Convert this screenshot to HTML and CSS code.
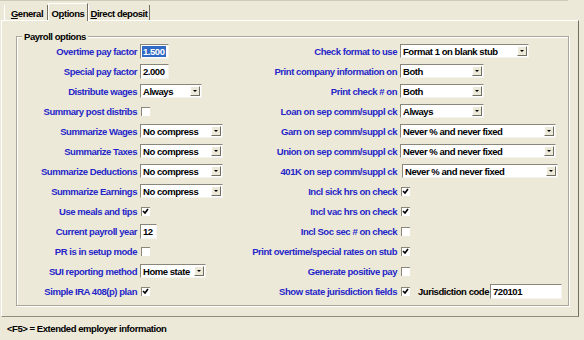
FILE: index.html
```html
<!DOCTYPE html>
<html lang="en">
<head>
    <meta charset="UTF-8">
    <title>Payroll options</title>
    <link rel="stylesheet" href="styles.css">
</head>
<body>

<div class="topline"></div>

<div class="tabs">
    <div class="tab tab-general"><u>G</u>eneral</div>
    <div class="tab tab-options active">O<u>p</u>tions</div>
    <div class="tab tab-direct"><u>D</u>irect deposit</div>
</div>

<div class="panel">
    <fieldset class="group">
        <legend>Payroll options</legend>
        <div class="form">
            <!-- row 1 -->
            <span class="label">Overtime pay factor</span>
            <span class="input w29"><span class="sel">1.500</span></span>
            <span class="label">Check format to use</span>
            <span class="select w128">Format 1 on blank stub<i class="btn"></i></span>

            <!-- row 2 -->
            <span class="label">Special pay factor</span>
            <span class="input w29">2.000</span>
            <span class="label">Print company information on</span>
            <span class="select w83">Both<i class="btn"></i></span>

            <!-- row 3 -->
            <span class="label">Distribute wages</span>
            <span class="select w61">Always<i class="btn"></i></span>
            <span class="label">Print check # on</span>
            <span class="select w83">Both<i class="btn"></i></span>

            <!-- row 4 -->
            <span class="label">Summary post distribs</span>
            <span class="check"></span>
            <span class="label">Loan on sep comm/suppl ck</span>
            <span class="select w83">Always<i class="btn"></i></span>

            <!-- row 5 -->
            <span class="label">Summarize Wages</span>
            <span class="select w82">No compress<i class="btn"></i></span>
            <span class="label">Garn on sep comm/suppl ck</span>
            <span class="select w155">Never % and never fixed<i class="btn"></i></span>

            <!-- row 6 -->
            <span class="label">Summarize Taxes</span>
            <span class="select w82">No compress<i class="btn"></i></span>
            <span class="label">Union on sep comm/suppl ck</span>
            <span class="select w155">Never % and never fixed<i class="btn"></i></span>

            <!-- row 7 -->
            <span class="label">Summarize Deductions</span>
            <span class="select w82">No compress<i class="btn"></i></span>
            <span class="label">401K on sep comm/suppl ck</span>
            <span class="select w155 shift">Never % and never fixed<i class="btn"></i></span>

            <!-- row 8 -->
            <span class="label">Summarize Earnings</span>
            <span class="select w82">No compress<i class="btn"></i></span>
            <span class="label">Incl sick hrs on check</span>
            <span class="check on"><svg viewBox="0 0 7 7"><path d="M1 3 L3 5 L6 1"/></svg></span>

            <!-- row 9 -->
            <span class="label">Use meals and tips</span>
            <span class="check on"><svg viewBox="0 0 7 7"><path d="M1 3 L3 5 L6 1"/></svg></span>
            <span class="label">Incl vac hrs on check</span>
            <span class="check on"><svg viewBox="0 0 7 7"><path d="M1 3 L3 5 L6 1"/></svg></span>

            <!-- row 10 -->
            <span class="label">Current payroll year</span>
            <span class="input w16">12</span>
            <span class="label">Incl Soc sec # on check</span>
            <span class="check"></span>

            <!-- row 11 -->
            <span class="label">PR is in setup mode</span>
            <span class="check"></span>
            <span class="label">Print overtime/special rates on stub</span>
            <span class="check on"><svg viewBox="0 0 7 7"><path d="M1 3 L3 5 L6 1"/></svg></span>

            <!-- row 12 -->
            <span class="label">SUI reporting method</span>
            <span class="select w65">Home state<i class="btn"></i></span>
            <span class="label">Generate positive pay</span>
            <span class="check"></span>

            <!-- row 13 -->
            <span class="label">Simple IRA 408(p) plan</span>
            <span class="check on"><svg viewBox="0 0 7 7"><path d="M1 3 L3 5 L6 1"/></svg></span>
            <span class="label">Show state jurisdiction fields</span>
            <span class="juris">
                <span class="check on"><svg viewBox="0 0 7 7"><path d="M1 3 L3 5 L6 1"/></svg></span>
                <span class="plain">Jurisdiction code</span>
                <span class="input w71">720101</span>
            </span>
        </div>
    </fieldset>
</div>

<div class="status">&lt;F5&gt; = Extended employer information</div>

</body>
</html>
```

FILE: styles.css
```css
* {
    margin: 0;
    padding: 0;
    box-sizing: border-box;
}

body {
    width: 584px;
    height: 340px;
    overflow: hidden;
    background: #ece9d8;
    font-family: "Liberation Sans", Arial, sans-serif;
    font-size: 9.5px;
    font-weight: bold;
    letter-spacing: -0.45px;
    color: #000;
}

.topline {
    width: 568px;
    height: 3px;
    border-top: 1px solid #cfcbbb;
}

/* Tabs */
.tabs {
    display: flex;
    align-items: flex-end;
    height: 17px;
    padding-left: 4px;
}

.tab {
    height: 15px;
    padding-top: 2px;
    line-height: 13px;
    text-align: center;
    white-space: nowrap;
    border-left: 1px solid #fff;
    border-right: 1px solid #716f64;
}

.tab-general {
    width: 44px;
    padding-left: 2px;
}

.tab-options {
    width: 40px;
}

.tab-direct {
    width: 62px;
}

.tab.active {
    position: relative;
    height: 18px;
    margin-bottom: -1px;
    padding-top: 3px;
    border-top: 1px solid #fff;
    background: #ece9d8;
    z-index: 1;
}

/* Tab page */
.panel {
    width: 578px;
    height: 297px;
    margin-left: 1px;
    padding: 10px 0 0 14px;
    border-top: 1px solid #fff;
    border-left: 1px solid #fff;
    border-right: 1px solid #716f64;
    border-bottom: 1px solid #8f8c80;
}

.group {
    width: 553px;
    height: 275px;
    border: 1px solid #aca899;
    box-shadow: inset 1px 1px 0 #fff, 1px 1px 0 #fff;
}

.group legend {
    margin-left: 5px;
    padding: 0 2px;
    line-height: 11px;
    background: #ece9d8;
}

.form {
    display: grid;
    grid-template-columns: 120px 117px 137px 1fr;
    grid-auto-rows: 20px;
    column-gap: 3px;
    align-items: center;
    margin-top: -1px;
}

.label {
    justify-self: end;
    white-space: nowrap;
    color: #2626c8;
}

.plain {
    white-space: nowrap;
    margin: 0 1px 0 8px;
}

/* Controls */
.input,
.select {
    display: flex;
    align-items: center;
    height: 15px;
    padding-left: 2px;
    background: #fff;
    border: 1px solid;
    border-color: #8a877a #f4f3ee #f4f3ee #8a877a;
    white-space: nowrap;
}

.select {
    justify-content: space-between;
    height: 14px;
}

.select .btn {
    position: relative;
    width: 10px;
    height: 10px;
    margin-right: 1px;
    background: #ece9d8;
    border: 1px solid;
    border-color: #fff #716f64 #716f64 #fff;
}

.select .btn::after {
    content: "";
    position: absolute;
    left: 2px;
    top: 3px;
    border-left: 2px solid transparent;
    border-right: 2px solid transparent;
    border-top: 2px solid #000;
}

.sel {
    background: #316ac5;
    color: #fff;
    padding: 0 1px;
    margin-left: -1px;
}

.shift {
    margin-left: 2px;
}

.w16 { width: 17px; }
.w29 { width: 29px; }
.w61 { width: 62px; }
.w65 { width: 66px; }
.w71 { width: 72px; }
.w82 { width: 83px; }
.w83 { width: 84px; }
.w128 { width: 129px; }
.w155 { width: 156px; }

.check {
    width: 9px;
    height: 9px;
    background: #fff;
    border-top: 1px solid #8a877a;
    border-left: 1px solid #8a877a;
    margin-left: 1px;
}

.check svg {
    display: block;
    width: 7px;
    height: 7px;
    fill: none;
    stroke: #000;
    stroke-width: 1.6;
}

.juris {
    display: flex;
    align-items: center;
}

/* Status line */
.status {
    padding: 6px 0 0 7px;
    line-height: 12px;
}
```
